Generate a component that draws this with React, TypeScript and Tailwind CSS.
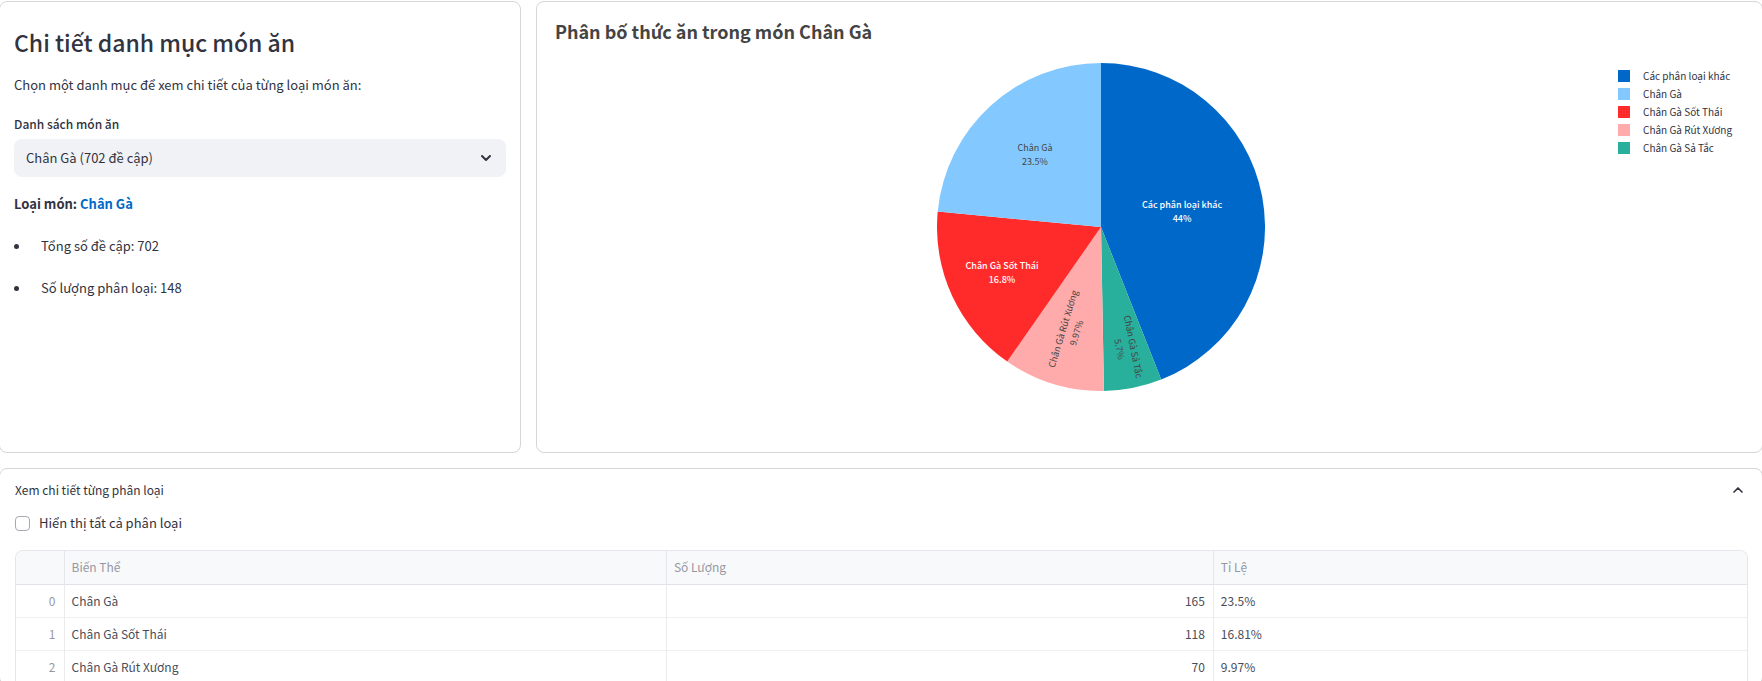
import { useState } from 'react';
import { ChevronDown, ChevronUp } from 'lucide-react';

type Slice = {
  name: string;
  count: number;
  percent: string;
  fill: string;
  swatch: string;
  textColor: string;
  label: { x: number; y: number; rotate: number };
};

const slices: Slice[] = [
  { name: 'Các phân loại khác', count: 309, percent: '44%', fill: '#0068c9', swatch: 'bg-[#0068c9]', textColor: '#ffffff', label: { x: 81, y: -15, rotate: 0 } },
  { name: 'Chân Gà Sả Tắc', count: 40, percent: '5.7%', fill: '#29b09d', swatch: 'bg-[#29b09d]', textColor: '#444444', label: { x: 25, y: 121, rotate: 79 } },
  { name: 'Chân Gà Rút Xương', count: 70, percent: '9.97%', fill: '#ffabab', swatch: 'bg-[#ffabab]', textColor: '#444444', label: { x: -31, y: 104, rotate: -73 } },
  { name: 'Chân Gà Sốt Thái', count: 118, percent: '16.8%', fill: '#ff2b2b', swatch: 'bg-[#ff2b2b]', textColor: '#ffffff', label: { x: -99, y: 46, rotate: 0 } },
  { name: 'Chân Gà', count: 165, percent: '23.5%', fill: '#83c9ff', swatch: 'bg-[#83c9ff]', textColor: '#444444', label: { x: -66, y: -72, rotate: 0 } },
];

const legend = [slices[0], slices[4], slices[3], slices[2], slices[1]];

const rows = [
  { name: 'Chân Gà', count: 165, ratio: '23.5%' },
  { name: 'Chân Gà Sốt Thái', count: 118, ratio: '16.81%' },
  { name: 'Chân Gà Rút Xương', count: 70, ratio: '9.97%' },
];

const RADIUS = 164;
const TOTAL = slices.reduce((sum, s) => sum + s.count, 0);

function pointAt(value: number) {
  const angle = (value / TOTAL) * 2 * Math.PI;
  return `${(RADIUS * Math.sin(angle)).toFixed(2)} ${(-RADIUS * Math.cos(angle)).toFixed(2)}`;
}

function PieChart() {
  let start = 0;
  const drawn = slices.map((s) => {
    const from = start;
    start += s.count;
    const large = s.count > TOTAL / 2 ? 1 : 0;
    return { ...s, d: `M0 0L${pointAt(from)}A${RADIUS} ${RADIUS} 0 ${large} 1 ${pointAt(start)}Z` };
  });
  return (
    <svg viewBox="-164 -164 328 328" className="size-[328px]" role="img" aria-label="Phân bố thức ăn trong món Chân Gà">
      {drawn.map((s) => (
        <path key={s.name} d={s.d} fill={s.fill} />
      ))}
      {drawn.map((s) => (
        <g
          key={s.name}
          transform={`translate(${s.label.x} ${s.label.y}) rotate(${s.label.rotate})`}
          fill={s.textColor}
          textAnchor="middle"
          className={s.textColor === '#ffffff' ? 'text-[9px] font-medium' : 'text-[9px]'}
        >
          <text y={-4}>{s.name}</text>
          <text y={10}>{s.percent}</text>
        </g>
      ))}
    </svg>
  );
}

function DetailPanel() {
  return (
    <section className="rounded-lg border border-[#d6d6d9] px-3.5 pt-[22px]">
      <h1 className="text-[23px] font-medium leading-9">Chi tiết danh mục món ăn</h1>
      <p className="mt-[13px] text-[13px] leading-6">Chọn một danh mục để xem chi tiết của từng loại món ăn:</p>
      <label htmlFor="dish" className="mt-[15px] block text-xs font-medium leading-6">Danh sách món ăn</label>
      <div className="relative mt-[3px]">
        <select id="dish" className="block h-[38px] w-full appearance-none rounded-lg bg-[#f0f2f6] px-3 text-[13px] outline-none">
          <option>Chân Gà (702 đề cập)</option>
        </select>
        <ChevronDown className="pointer-events-none absolute right-3 top-[11px] size-4" strokeWidth={3} />
      </div>
      <p className="mt-[15px] text-[13px] font-bold leading-6">
        Loại món: <span className="text-[#0068c9]">Chân Gà</span>
      </p>
      <ul className="mt-[18px] flex flex-col gap-[18px] text-[13px] leading-6">
        {['Tổng số đề cập: 702', 'Số lượng phân loại: 148'].map((item) => (
          <li key={item} className="flex items-center gap-[22px]">
            <span className="size-[5px] rounded-full bg-[#31333f]" />
            {item}
          </li>
        ))}
      </ul>
    </section>
  );
}

function ChartPanel() {
  return (
    <section className="rounded-lg border border-[#d6d6d9] pt-[15px]">
      <h2 className="px-[18px] text-lg font-bold leading-7 text-[#444444]">Phân bố thức ăn trong món Chân Gà</h2>
      <div className="mt-[18px] flex">
        <div className="flex flex-1 justify-center pl-12">
          <PieChart />
        </div>
        <ul className="mt-1 w-36 text-[10px] leading-[18px]">
          {legend.map((s) => (
            <li key={s.name} className="flex items-center gap-[13px]">
              <span className={`size-3 ${s.swatch}`} />
              {s.name}
            </li>
          ))}
        </ul>
      </div>
    </section>
  );
}

function VariantTable() {
  return (
    <div className="mt-[15px] overflow-hidden rounded-t-lg border border-b-0 border-[#e6e7eb]">
      <table className="w-full table-fixed border-collapse text-xs text-[#4a4c57]">
        <colgroup>
          <col className="w-12" />
          <col className="w-[34.8%]" />
          <col className="w-[31.6%]" />
          <col />
        </colgroup>
        <thead className="bg-[#f8f9fb] text-[#9698a1]">
          <tr className="h-[33px] border-b border-[#e2e3e8]">
            <th aria-label="#" />
            <th className="border-l border-[#e6e7eb] px-[7px] text-left font-normal">Biến Thể</th>
            <th className="border-l border-[#e6e7eb] px-[7px] text-left font-normal">Số Lượng</th>
            <th className="border-l border-[#e6e7eb] px-[7px] text-left font-normal">Tỉ Lệ</th>
          </tr>
        </thead>
        <tbody>
          {rows.map((row, i) => (
            <tr key={row.name} className="h-[33px] border-b border-[#efeff2]">
              <td className="px-2 text-right text-[#9698a1]">{i}</td>
              <td className="border-l border-[#ebebee] px-[7px]">{row.name}</td>
              <td className="border-l border-[#ebebee] px-2 text-right">{row.count}</td>
              <td className="border-l border-[#ebebee] px-[7px]">{row.ratio}</td>
            </tr>
          ))}
        </tbody>
      </table>
    </div>
  );
}

export default function App() {
  const [open, setOpen] = useState(true);
  const [showAll, setShowAll] = useState(false);
  return (
    <main className="h-screen overflow-hidden bg-white pt-px font-['Noto_Sans_CJK_SC','Noto_Sans',sans-serif] text-[#31333f]">
      <div className="-mx-px flex flex-col gap-[15px]">
        <div className="grid min-h-[452px] grid-cols-[37fr_87fr] gap-[15px]">
          <DetailPanel />
          <ChartPanel />
        </div>
        <section className="rounded-lg border border-[#d6d6d9] pl-[15px] pr-3.5 pt-[9px]">
          <button type="button" aria-expanded={open} onClick={() => setOpen(!open)} className="flex w-full items-center justify-between pr-0.5 text-xs leading-6">
            Xem chi tiết từng phân loại
            <ChevronUp className="size-4" strokeWidth={2.5} />
          </button>
          {open && (
            <>
              <label className="mt-[9px] flex items-center gap-[9px] text-[13px] leading-6">
                <input
                  type="checkbox"
                  checked={showAll}
                  onChange={(e) => setShowAll(e.target.checked)}
                  className="size-[15px] appearance-none rounded border border-[#a8a9b0] checked:bg-[#0068c9]"
                />
                Hiển thị tất cả phân loại
              </label>
              <VariantTable />
            </>
          )}
        </section>
      </div>
    </main>
  );
}
